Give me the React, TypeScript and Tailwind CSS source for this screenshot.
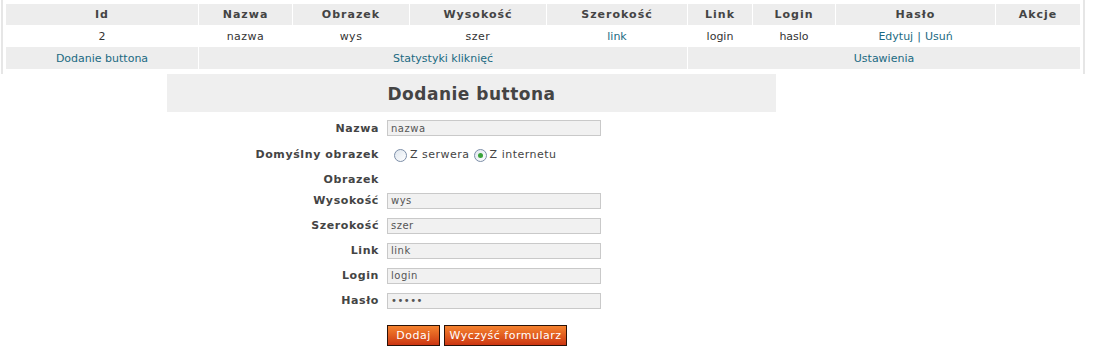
import React from "react";

const font = { fontFamily: '"DejaVu Sans", Verdana, sans-serif' };

const cols = ["Id", "Nazwa", "Obrazek", "Wysokość", "Szerokość", "Link", "Login", "Hasło", "Akcje"];

function Radio({ checked }: { checked?: boolean }) {
  return (
    <span className="relative inline-flex h-[13px] w-[13px] items-center justify-center rounded-full border border-[#7c8ea8] bg-gradient-to-br from-[#dfe6ee] to-[#ffffff]">
      {checked && <span className="h-[5px] w-[5px] rounded-full bg-[#3aa33a]"></span>}
    </span>
  );
}

function Field({ label, value, h }: { label: string; value?: string; h: string }) {
  return (
    <div className={`flex items-center ${h}`}>
      <div className="w-[212px] pt-[2px] text-right text-[11px] font-bold tracking-[0.6px] text-[#444]">{label}</div>
      {value !== undefined && (
        <div className="ml-[8px] flex h-[16px] w-[214px] items-center border border-[#c9c9c9] bg-[#f1f1f1] pl-[3px] text-[10px] tracking-[0.5px] text-[#555]">
          {value}
        </div>
      )}
    </div>
  );
}

export default function App() {
  return (
    <div className="h-[358px] w-[1096px] bg-white" style={font}>
      {/* tabela buttonów */}
      <div className="ml-px h-[74px] w-[1084px] border-x-2 border-[#e6e6e6] pl-[3px] pt-[4px]">
        <div className="grid grid-cols-[192px_93px_116px_136px_140px_64px_82px_159px_84px] gap-x-px text-[11px] text-[#333]">
          {cols.map((c) => (
            <div key={c} className="flex h-[21px] items-center justify-center bg-[#ededed] pt-[2px] font-bold tracking-[1px] text-[#444]">
              {c}
            </div>
          ))}
          <div className="flex h-[22px] items-center justify-center pt-[3px]">2</div>
          <div className="flex h-[22px] items-center justify-center pt-[3px] tracking-[0.5px]">nazwa</div>
          <div className="flex h-[22px] items-center justify-center pt-[3px] tracking-[0.5px]">wys</div>
          <div className="flex h-[22px] items-center justify-center pt-[3px] tracking-[0.5px]">szer</div>
          <div className="flex h-[22px] items-center justify-center pt-[3px] text-[#1b6a82]">link</div>
          <div className="flex h-[22px] items-center justify-center pt-[3px]">login</div>
          <div className="flex h-[22px] items-center justify-center pt-[3px]">haslo</div>
          <div className="flex h-[22px] items-center justify-center pt-[3px] text-[#1b6a82]">
            Edytuj <span className="mx-[4px]">|</span> Usuń
          </div>
          <div className="h-[22px]"></div>
          <div className="flex h-[22px] items-center justify-center bg-[#ededed] pt-[2px] text-[#1b6a82]">Dodanie buttona</div>
          <div className="col-span-4 flex h-[22px] items-center justify-center bg-[#ededed] pt-[2px] text-[#1b6a82]">Statystyki kliknięć</div>
          <div className="col-span-4 flex h-[22px] items-center justify-center bg-[#ededed] pt-[2px] text-[#1b6a82]">Ustawienia</div>
        </div>
      </div>

      {/* formularz */}
      <div className="ml-[167px] w-[609px]">
        <div className="flex h-[38px] items-center justify-center bg-[#efefef] pt-[3px] text-[17px] font-bold tracking-[0.5px] text-[#444]">
          Dodanie buttona
        </div>
        <div className="pt-[5px]">
          <Field label="Nazwa" value="nazwa" h="h-[22px]" />
          <div className="flex h-[31px] items-center">
            <div className="w-[212px] pt-[2px] text-right text-[11px] font-bold tracking-[0.6px] text-[#444]">Domyślny obrazek</div>
            <div className="ml-[8px] flex items-center pt-[2px] text-[11px] tracking-[0.5px] text-[#444]">
              <span className="ml-[7px] flex"><Radio /></span>
              <span className="ml-[3px] mr-[4px]">Z serwera</span>
              <Radio checked />
              <span className="ml-[3px]">Z internetu</span>
            </div>
          </div>
          <Field label="Obrazek" h="h-[18px]" />
          <Field label="Wysokość" value="wys" h="h-[25px]" />
          <Field label="Szerokość" value="szer" h="h-[25px]" />
          <Field label="Link" value="link" h="h-[25px]" />
          <Field label="Login" value="login" h="h-[25px]" />
          <Field label="Hasło" value="•••••" h="h-[25px]" />
          <div className="ml-[220px] mt-[12px] flex gap-[4px]">
            <button className="h-[21px] w-[53px] border border-[#2a1208] bg-gradient-to-b from-[#f5822e] to-[#cc3412] pt-px text-[11px] tracking-[0.5px] text-white">
              Dodaj
            </button>
            <button className="h-[21px] w-[123px] border border-[#2a1208] bg-gradient-to-b from-[#f5822e] to-[#cc3412] pt-px text-[11px] tracking-[0.5px] text-white">
              Wyczyść formularz
            </button>
          </div>
        </div>
      </div>
    </div>
  );
}
